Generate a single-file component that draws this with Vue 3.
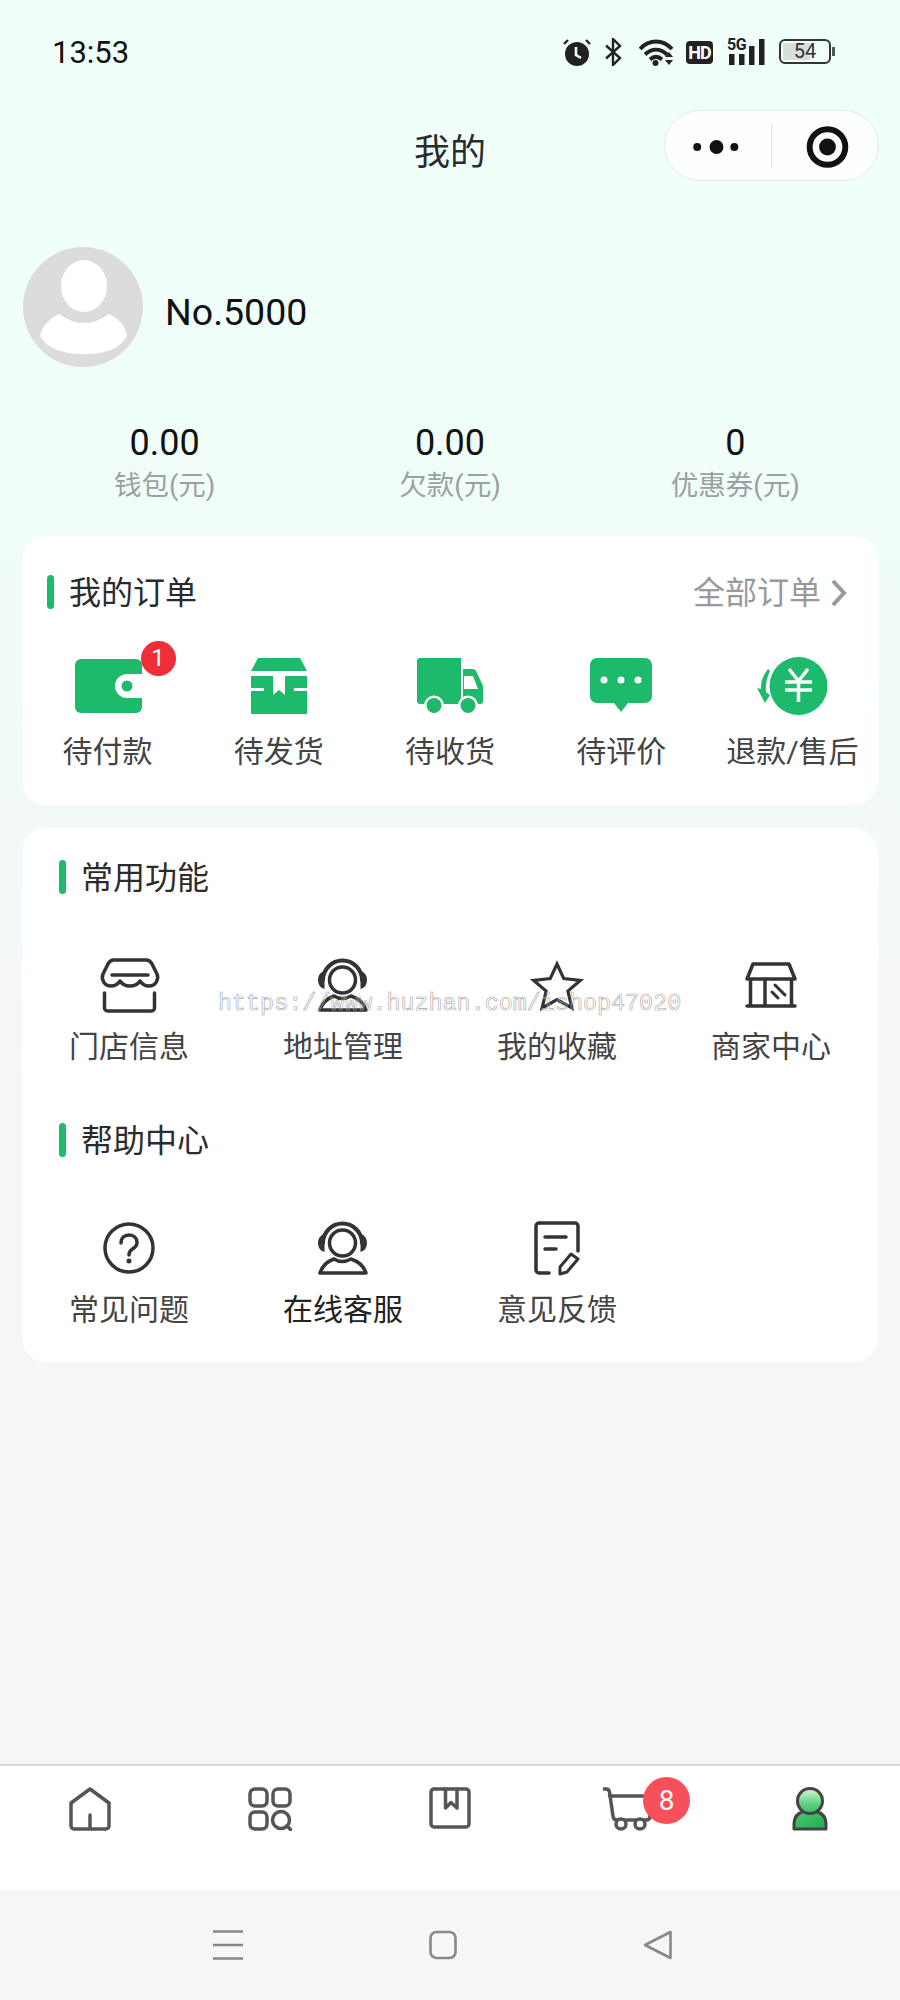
<script setup>
const stats = [
  { value: "0.00", label: "钱包(元)" },
  { value: "0.00", label: "欠款(元)" },
  { value: "0", label: "优惠券(元)" },
];
</script>

<template>
  <div class="page">
    <div class="main">
      <!-- status bar -->
      <div class="status">
        <span class="time">13:53</span>
        <div class="status-icons">
          <svg class="st-alarm" width="28" height="28" viewBox="0 0 28 28">
            <circle cx="14" cy="16" r="12" fill="#222" />
            <path d="M5 2 1 6M23 2l4 4" stroke="#222" stroke-width="2.4" fill="none" />
            <path d="M13 9v8l5 3" stroke="#f0fff8" stroke-width="2.6" fill="none" />
          </svg>
          <svg class="st-bt" width="17" height="28" viewBox="0 0 17 28">
            <path d="M1 7.500 15 20l-7 7V1l7 7L1 20.500" stroke="#222" stroke-width="2.4" fill="none" />
          </svg>
          <svg class="st-wifi" width="36" height="28" viewBox="0 0 36 28">
            <path d="M1 11C10 1 24 1 33 11M6 16.500c7-6.500 15-6.500 22 0M11 21.500c4-3.500 8-3.500 12 0" stroke="#222" stroke-width="4" fill="none" />
            <circle cx="16.500" cy="25" r="3" fill="#222" />
            <path d="M26 19l4-5 4 5zM26 22h8l-4 5z" fill="#222" />
          </svg>
          <span class="st-hd">HD</span>
          <div class="st-signal">
            <span class="st-5g">5G</span>
            <svg width="38" height="28" viewBox="0 0 38 28">
              <path d="M2 16h5.500v11H2zM12 16h5.500v11H12zM22 8h5.500v19H22zM32 1h5.500v26H32z" fill="#222" />
            </svg>
          </div>
          <div class="battery">
            <div class="battery-fill"></div>
            <span class="battery-num">54</span>
          </div>
        </div>
      </div>

      <!-- title and capsule -->
      <div class="nav">
        <span class="nav-title">我的</span>
        <div class="capsule">
          <svg width="107" height="70" viewBox="0 0 107 70">
            <circle cx="32.500" cy="36" r="4" fill="#111" />
            <circle cx="52" cy="36" r="7" fill="#111" />
            <circle cx="70" cy="36" r="4" fill="#111" />
          </svg>
          <div class="capsule-line"></div>
          <svg width="107" height="70" viewBox="0 0 107 70">
            <circle cx="56" cy="36" r="18" fill="none" stroke="#111" stroke-width="6" />
            <circle cx="56" cy="36" r="8.500" fill="#111" />
          </svg>
        </div>
      </div>

      <!-- profile -->
      <div class="profile">
        <svg width="120" height="120" viewBox="0 0 120 120">
          <circle cx="60" cy="60" r="60" fill="#dcdcdc" />
          <ellipse cx="61" cy="39" rx="23" ry="26" fill="#fff" />
          <path d="M17 89Q20 75 36 67 48 76 61 76T86 67Q102 75 104 89 95 107 61 107T17 89Z" fill="#fff" />
        </svg>
        <span class="name">No.5000</span>
      </div>

      <div class="stats">
        <div v-for="s in stats" :key="s.label" class="stat">
          <div class="stat-value">{{ s.value }}</div>
          <div class="stat-label">{{ s.label }}</div>
        </div>
      </div>

      <!-- orders -->
      <div class="card card-orders">
        <div class="orders-head">
          <div class="head">
            <i class="bar"></i>
            <span class="head-title">我的订单</span>
          </div>
          <div class="all">
            <span>全部订单</span>
            <svg width="16" height="28" viewBox="0 0 16 28">
              <path d="M2 2l11 12L2 26" fill="none" stroke="#999" stroke-width="4" />
            </svg>
          </div>
        </div>
        <div class="orders">
          <div class="order">
            <div class="order-icon">
              <div class="wallet">
                <svg width="67" height="54" viewBox="0 0 67 54">
                  <rect width="67" height="54" rx="6" fill="#1dba6b" />
                  <path d="M67 15H52a12 12 0 0 0 0 24h15z" fill="#fff" />
                  <circle cx="52" cy="27" r="5.500" fill="#1dba6b" />
                </svg>
                <span class="badge-red">1</span>
              </div>
            </div>
            <span class="item-label">待付款</span>
          </div>
          <div class="order">
            <div class="order-icon">
              <svg width="56" height="56" viewBox="0 0 56 56">
                <path d="M7 0h42l7 13H0z" fill="#1dba6b" />
                <path d="M0 18h22v19l6-5 6 5V18h22v12H43v3h13v23H0V33h13v-3H0z" fill="#1dba6b" />
              </svg>
            </div>
            <span class="item-label">待发货</span>
          </div>
          <div class="order">
            <div class="order-icon">
              <svg width="66" height="56" viewBox="0 0 66 56">
                <path d="M3 0h41v46H3a3 3 0 0 1-3-3V3a3 3 0 0 1 3-3z" fill="#1dba6b" />
                <path d="M46 11h10q2 0 3 2l7 15v15a3 3 0 0 1-3 3H46z" fill="#1dba6b" />
                <path d="M47 18h9l5 13H47z" fill="#fff" />
                <circle cx="17" cy="47.500" r="10" fill="#fff" />
                <circle cx="51" cy="47.500" r="10" fill="#fff" />
                <circle cx="17" cy="47.500" r="7.500" fill="#1dba6b" />
                <circle cx="51" cy="47.500" r="7.500" fill="#1dba6b" />
              </svg>
            </div>
            <span class="item-label">待收货</span>
          </div>
          <div class="order">
            <div class="order-icon">
              <svg width="62" height="56" viewBox="0 0 62 56">
                <path d="M7 0h48a7 7 0 0 1 7 7v31a7 7 0 0 1-7 7H38l-7 9-7-9H7a7 7 0 0 1-7-7V7a7 7 0 0 1 7-7z" fill="#1dba6b" />
                <circle cx="14" cy="22" r="3.500" fill="#fff" />
                <circle cx="31" cy="22" r="3.500" fill="#fff" />
                <circle cx="48" cy="22" r="3.500" fill="#fff" />
              </svg>
            </div>
            <span class="item-label">待评价</span>
          </div>
          <div class="order">
            <div class="order-icon">
              <svg width="70" height="58" viewBox="0 0 70 58">
                <circle cx="41.500" cy="29" r="29" fill="#1dba6b" />
                <path d="M32 12l9.500 12L51 12M28 25h27M28 33h27M41.500 24v21" fill="none" stroke="#fff" stroke-width="3.500" />
                <path d="M11 12Q3 22 4 32L0 31 8 46 13 38 9 35Q8 24 13 14Z" fill="#1dba6b" />
              </svg>
            </div>
            <span class="item-label">退款/售后</span>
          </div>
        </div>
      </div>

      <!-- common tools and help -->
      <div class="card card-tools">
        <div class="head">
          <i class="bar"></i>
          <span class="head-title">常用功能</span>
        </div>
        <div class="tools">
          <div class="tool">
            <div class="tool-icon">
              <svg width="59" height="55" viewBox="0 0 59 55" class="line">
                <path d="M13 2h33c3 0 5 2 6 4l5 10c2 5-1 12-8 12-4 0-7-2-9-5-2 3-6 5-10 5s-8-2-10-5c-2 3-5 5-9 5-7 0-10-7-8-12l5-10c1-2 3-4 6-4z" />
                <path d="M12 17h36M4.500 35v15a3 3 0 0 0 3 3h44a3 3 0 0 0 3-3V35" />
              </svg>
            </div>
            <span class="item-label">门店信息</span>
          </div>
          <div class="tool">
            <div class="tool-icon">
              <svg width="50" height="53" viewBox="0 0 50 53" class="line">
                <circle cx="24.500" cy="21" r="13" />
                <path d="M5 21a19.500 19.500 0 0 1 39 0" stroke-width="4" />
                <path d="M6.500 12Q0 14 0 21t6.500 9zM42.500 12q6.500 2 6.500 9t-6.500 9z" fill="#333" stroke="none" />
                <path d="M2 51h46Q45 41 33 37 24 42 16 37 5 41 2 51z" />
              </svg>
            </div>
            <span class="item-label">地址管理</span>
          </div>
          <div class="tool">
            <div class="tool-icon">
              <svg width="52" height="51" viewBox="0 0 52 51" class="star">
                <path d="M26 4l6.800 14.600 16.500 1.800-12.400 10.600 4 17L26 39.500 11.100 48l4-17L2.700 20.400l16.500-1.800z" />
              </svg>
            </div>
            <span class="item-label">我的收藏</span>
          </div>
          <div class="tool">
            <div class="tool-icon">
              <svg width="52" height="46" viewBox="0 0 52 46" class="line">
                <path d="M8 2h36l6 15H2zM5.500 17v27M46.500 17v27M2 44h48M20 17v27" />
                <path d="M27 30l6 6M30 23l10 10" stroke-width="3" />
              </svg>
            </div>
            <span class="item-label">商家中心</span>
          </div>
        </div>

        <div class="head head-help">
          <i class="bar"></i>
          <span class="head-title">帮助中心</span>
        </div>
        <div class="tools">
          <div class="tool">
            <div class="tool-icon">
              <svg width="52" height="52" viewBox="0 0 52 52" class="line">
                <circle cx="26" cy="26" r="24" />
                <path d="M18 21c0-5 3.500-8 8-8s8 3 8 7.500c0 3.500-2 5-4.500 6.500-2.500 1.500-3.500 3-3.500 6" />
                <circle cx="26" cy="39" r="2.500" fill="#333" stroke="none" />
              </svg>
            </div>
            <span class="item-label">常见问题</span>
          </div>
          <div class="tool">
            <div class="tool-icon">
              <svg width="50" height="53" viewBox="0 0 50 53" class="line">
                <circle cx="24.500" cy="21" r="13" />
                <path d="M5 21a19.500 19.500 0 0 1 39 0" stroke-width="4" />
                <path d="M6.500 12Q0 14 0 21t6.500 9zM42.500 12q6.500 2 6.500 9t-6.500 9z" fill="#333" stroke="none" />
                <path d="M2 51h46Q45 41 33 37 24 42 16 37 5 41 2 51z" />
              </svg>
            </div>
            <span class="item-label item-dark">在线客服</span>
          </div>
          <div class="tool">
            <div class="tool-icon">
              <svg width="46" height="54" viewBox="0 0 46 54" class="line">
                <path d="M44 30V5a3 3 0 0 0-3-3H5a3 3 0 0 0-3 3v44a3 3 0 0 0 3 3h10M11 16h21M11 28h11" />
                <path d="M37 33l7 5-11 13-7 2 0-7z" stroke-width="3" />
              </svg>
            </div>
            <span class="item-label">意见反馈</span>
          </div>
        </div>
        <span class="stamp">https://www.huzhan.com/ishop47020</span>
      </div>
    </div>

    <!-- bottom tabs -->
    <div class="tabbar">
      <svg width="42" height="44" viewBox="0 0 42 44" class="tab-line">
        <path d="M21 2l19 14v23a3 3 0 0 1-3 3H5a3 3 0 0 1-3-3V16zM21 28v14" />
      </svg>
      <svg width="44" height="44" viewBox="0 0 44 44" class="tab-line">
        <rect x="2" y="2" width="17" height="17" rx="5" />
        <rect x="25" y="2" width="17" height="17" rx="5" />
        <rect x="2" y="25" width="17" height="17" rx="5" />
        <circle cx="33" cy="33" r="8.500" />
        <path d="M39 39l4 4" />
      </svg>
      <svg width="42" height="42" viewBox="0 0 42 42" class="tab-line">
        <rect x="2" y="2" width="38" height="38" rx="3" />
        <path d="M16.500 2v19l5.500-5.500 6 5.500V2" />
      </svg>
      <div class="cart">
        <svg width="50" height="44" viewBox="0 0 50 44" class="tab-line">
          <path d="M0 2h3q3 0 3.500 3L10 29q.5 4 4 4h29q4 0 4-4V9H6.500" />
          <circle cx="18" cy="37" r="5" fill="#fff" />
          <circle cx="37" cy="37" r="5" fill="#fff" />
        </svg>
        <span class="badge-cart">8</span>
      </div>
      <svg width="36" height="44" viewBox="0 0 36 44">
        <defs>
          <linearGradient id="userHead" x1="0" y1="0" x2="0" y2="1">
            <stop offset="0.1" stop-color="#c4f2c4" />
            <stop offset="0.6" stop-color="#62d184" />
            <stop offset="1" stop-color="#35bd62" />
          </linearGradient>
          <linearGradient id="userBody" x1="0" y1="0" x2="1" y2="1">
            <stop offset="0" stop-color="#4ccb74" />
            <stop offset="1" stop-color="#23a853" />
          </linearGradient>
        </defs>
        <path d="M2 42v-6q0-9 11-12 5 2 10 0 11 3 11 12v6z" fill="url(#userBody)" stroke="#444" stroke-width="3" stroke-linejoin="round" />
        <circle cx="18" cy="14" r="12.500" fill="url(#userHead)" stroke="#444" stroke-width="3" />
      </svg>
    </div>

    <!-- system navigation -->
    <div class="sysnav">
      <svg width="30" height="30" viewBox="0 0 30 30">
        <path d="M0 1.500h30M0 15h30M0 28.500h30" stroke="#888" stroke-width="2.400" />
      </svg>
      <svg width="28" height="30" viewBox="0 0 28 30">
        <rect x="1.500" y="2" width="25" height="26" rx="6" fill="none" stroke="#888" stroke-width="2.600" />
      </svg>
      <svg width="30" height="30" viewBox="0 0 30 30">
        <path d="M27.500 2 2 15l25.500 13z" fill="none" stroke="#888" stroke-width="2.600" stroke-linejoin="round" />
      </svg>
    </div>
  </div>
</template>

<style scoped>
.page {
  width: 900px;
  height: 2000px;
  display: flex;
  flex-direction: column;
  background: #f6f6f6;
  font-family: Roboto, "Noto Sans CJK SC", sans-serif;
  color: #333;
}

.main {
  flex: 1;
  background: linear-gradient(180deg, #f0fff9 0, #f0fff9 320px, #f2faf6 800px, #f6f6f6 1100px);
}

.status {
  height: 110px;
  box-sizing: border-box;
  padding: 38px 69px 0 52px;
  display: flex;
  justify-content: space-between;
  align-items: flex-start;
}

.time {
  font-size: 31px;
  line-height: 30px;
  color: #111;
}

.status-icons {
  display: flex;
  align-items: flex-start;
}

.st-bt {
  margin-left: 14px;
}

.st-wifi {
  margin-left: 17px;
}

.st-hd {
  margin: 3px 0 0 11px;
  width: 27px;
  height: 23px;
  line-height: 23px;
  border-radius: 4px;
  background: #222;
  color: #fff;
  font-size: 18px;
  font-weight: 700;
  text-align: center;
  letter-spacing: -1px;
}

.st-signal {
  position: relative;
  margin-left: 14px;
  display: flex;
}

/* sits in the gap above the two short bars */
.st-5g {
  position: absolute;
  left: 0;
  top: -1px;
  font-size: 16px;
  line-height: 16px;
  font-weight: 700;
  letter-spacing: -0.5px;
  color: #222;
}

.battery {
  position: relative;
  margin: 1px 0 0 14px;
  width: 52px;
  height: 25px;
  box-sizing: border-box;
  border: 2px solid #333;
  border-radius: 6px;
  padding: 2px;
  text-align: center;
}

.battery::after {
  content: "";
  position: absolute;
  right: -6px;
  top: 6px;
  width: 3px;
  height: 9px;
  background: #555;
}

.battery-fill {
  width: 27px;
  height: 17px;
  background: #d9dedb;
  border-radius: 2px;
}

.battery-num {
  position: absolute;
  left: 0;
  right: 0;
  top: 0;
  font-size: 20px;
  line-height: 21px;
  color: #333;
}

.nav {
  position: relative;
  height: 71px;
  box-sizing: border-box;
  padding-top: 14px;
  display: flex;
  justify-content: center;
  align-items: center;
}

.nav-title {
  font-size: 36px;
  line-height: 1;
  color: #2b2b2b;
}

.capsule {
  position: absolute;
  right: 21px;
  top: 0;
  width: 215px;
  height: 71px;
  box-sizing: border-box;
  border: 1px solid #e4e8e6;
  border-radius: 36px;
  background: #fdfffe;
  display: flex;
  align-items: center;
}

.capsule-line {
  width: 1px;
  height: 44px;
  background: #e2e2e2;
}

.profile {
  margin: 66px 0 0 23px;
  display: flex;
  align-items: center;
  gap: 22px;
}

.name {
  padding-top: 10px;
  font-size: 37.5px;
  color: #111;
}

.stats {
  margin-top: 54px;
  padding: 0 22px;
  display: grid;
  grid-template-columns: repeat(3, 1fr);
  text-align: center;
}

.stat-value {
  font-size: 36px;
  line-height: 44px;
  color: #111;
}

.stat-label {
  margin-top: 1px;
  font-size: 27.5px;
  line-height: 40px;
  color: #9aa1a1;
}

.card {
  margin: 0 22px;
  background: #fff;
  border-radius: 24px;
  box-sizing: border-box;
}

.card-orders {
  margin-top: 30px;
  height: 269px;
  padding-top: 39px;
}

.orders-head {
  height: 34px;
  padding: 0 31px 0 25px;
  display: flex;
  justify-content: space-between;
  align-items: center;
}

.head {
  height: 34px;
  display: flex;
  align-items: center;
  gap: 15px;
}

.bar {
  width: 7px;
  height: 34px;
  border-radius: 4px;
  background: #1dba6b;
}

.head-title {
  padding-top: 2px;
  font-size: 32px;
  line-height: 34px;
  color: #2b2b2b;
}

.all {
  display: flex;
  align-items: center;
  gap: 10px;
  padding-top: 2px;
  font-size: 32px;
  line-height: 34px;
  color: #999;
}

.orders {
  margin-top: 47px;
  display: grid;
  grid-template-columns: repeat(5, 1fr);
}

.order,
.tool {
  display: flex;
  flex-direction: column;
  align-items: center;
}

.order-icon,
.tool-icon {
  height: 60px;
  display: flex;
  align-items: center;
  justify-content: center;
}

.item-label {
  font-size: 30px;
  line-height: 40px;
  color: #444;
  white-space: nowrap;
}

.order .item-label {
  margin-top: 16px;
}

.tool .item-label {
  margin-top: 12px;
}

.item-dark {
  color: #222;
}

.wallet {
  position: relative;
  margin-left: 1px;
  display: flex;
}

.badge-red {
  position: absolute;
  left: 66px;
  top: -18px;
  width: 35px;
  height: 35px;
  border-radius: 50%;
  background: #ee2f37;
  color: #fff;
  font-size: 24px;
  line-height: 35px;
  text-align: center;
}

.card-tools {
  position: relative;
  margin-top: 23px;
  height: 534px;
  padding: 32px 0 0;
}

.card-tools .head {
  margin-left: 37px;
}

.head-help {
  margin-top: 56px;
}

.tools {
  margin-top: 61px;
  display: grid;
  grid-template-columns: repeat(4, 1fr);
}

.line {
  fill: none;
  stroke: #333;
  stroke-width: 3.5;
  stroke-linejoin: round;
  stroke-linecap: round;
  overflow: visible;
}

.star {
  fill: none;
  stroke: #333;
  stroke-width: 3.2;
  stroke-linejoin: miter;
  overflow: visible;
}

.stamp {
  position: absolute;
  left: 196px;
  top: 161px;
  font-family: "Liberation Mono", monospace;
  font-size: 23.4px;
  line-height: 30px;
  color: transparent;
  -webkit-text-stroke: 0.6px #a8a8a8;
  white-space: nowrap;
}

.tabbar {
  height: 126px;
  box-sizing: border-box;
  border-top: 2px solid #d9d9d9;
  background: #fff;
  padding-top: 21px;
  display: grid;
  grid-template-columns: repeat(5, 1fr);
  justify-items: center;
  align-items: start;
}

.tab-line {
  fill: none;
  stroke: #555;
  stroke-width: 3.5;
  stroke-linejoin: round;
  stroke-linecap: round;
}

.cart {
  position: relative;
  margin-left: -4px;
  display: flex;
}

.badge-cart {
  position: absolute;
  left: 40px;
  top: -10px;
  width: 47px;
  height: 47px;
  border-radius: 50%;
  background: #f8505a;
  color: #fff;
  font-size: 28px;
  line-height: 47px;
  text-align: center;
}

.sysnav {
  height: 110px;
  box-sizing: border-box;
  padding: 40px 0 0 213px;
  background: #f6f6f6;
  display: flex;
  align-items: flex-start;
  gap: 186px;
}
</style>
